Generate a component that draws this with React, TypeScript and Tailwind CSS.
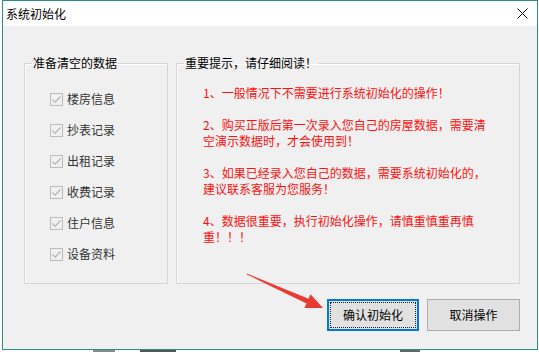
const font = { fontFamily: '"Microsoft YaHei", "Noto Sans CJK SC", "Noto Sans", sans-serif' };

const items = ["楼房信息", "抄表记录", "出租记录", "收费记录", "住户信息", "设备资料"];

const notes = [
  ["1、一般情况下不需要进行系统初始化的操作！"],
  ["2、购买正版后第一次录入您自己的房屋数据，需要清", "空演示数据时，才会使用到！"],
  ["3、如果已经录入您自己的数据，需要系统初始化的，", "建议联系客服为您服务！"],
  ["4、数据很重要，执行初始化操作，请慎重慎重再慎", "重！！！"],
];

function Check() {
  return (
    <span className="flex h-[13px] w-[13px] items-center justify-center border border-[#bcbcbc] bg-[#f0f0f0]">
      <svg width="11" height="11" viewBox="0 0 11 11">
        <path d="M1.5 5.5 L4.2 8.2 L9.5 2.5" fill="none" stroke="#b4b4b4" strokeWidth="1.2" />
      </svg>
    </span>
  );
}

export default function App() {
  return (
    <div className="relative h-[352px] w-[539px] overflow-hidden bg-white text-[12px] leading-[16px] text-black" style={font}>
      <div className="ml-[2px] flex h-[350px] w-[536px] flex-col border border-[#2f8d83]">
        {/* title bar */}
        <div className="flex h-[25px] items-center justify-between bg-white pl-[3px] pr-[9px]">
          <span>系统初始化</span>
          <svg width="11" height="11" viewBox="0 0 11 11">
            <path d="M0.5 0.5 L10.5 10.5 M10.5 0.5 L0.5 10.5" stroke="#111" strokeWidth="1" />
          </svg>
        </div>

        <div className="flex flex-1 flex-col bg-[#f0f0f0] pl-[21px] pr-[17px] pt-[29px]">
          <div className="flex h-[229px] gap-[8px]">
            <fieldset className="w-[144px] border border-[#d5d5d5] px-[7px] shadow-[inset_1px_1px_0_#fff]">
              <legend className="px-[1px]">准备清空的数据</legend>
              <div className="flex flex-col gap-[15px] pl-[18px] pt-[20px]">
                {items.map((t) => (
                  <label key={t} className="flex h-[16px] items-center gap-[4px] text-[#333]">
                    <Check />
                    <span>{t}</span>
                  </label>
                ))}
              </div>
            </fieldset>

            <fieldset className="flex-1 border border-[#d5d5d5] px-[7px] shadow-[inset_1px_1px_0_#fff]">
              <legend className="px-[1px]">重要提示，请仔细阅读！</legend>
              <div className="flex flex-col gap-[16px] pl-[19px] pt-[14px] text-[#ff1010]">
                {notes.map((p, i) => (
                  <p key={i} className="whitespace-nowrap">
                    {p.map((l, j) => (
                      <span key={j} className="block">
                        {l}
                      </span>
                    ))}
                  </p>
                ))}
              </div>
            </fieldset>
          </div>

          <div className="mt-[15px] flex justify-end gap-[8px]">
            <button className="flex h-[32px] w-[92px] items-center justify-center border-2 border-[#0078d7] bg-[#e1e1e1] p-[1px]">
              <span className="flex h-full w-full items-center justify-center border border-dotted border-[#222]">
                确认初始化
              </span>
            </button>
            <button className="flex h-[32px] w-[93px] items-center justify-center border border-[#adadad] bg-[#e1e1e1]">
              取消操作
            </button>
          </div>
        </div>
      </div>

      {/* bits of the window behind */}
      <div className="flex h-[2px]">
        <div className="ml-[93px] w-[22px] bg-[#8a8a8a]" />
        <div className="ml-[25px] w-[36px] bg-[#555]" />
        <div className="ml-[224px] w-[20px] bg-[#666]" />
      </div>

      {/* red arrow annotation */}
      <svg className="pointer-events-none absolute left-0 top-0" width="539" height="352">
        <polygon
          points="247,273.6 308.5,298.8 310.6,294.3 323,308 304.4,307.9 306.5,303.4 246.8,274.4"
          fill="#ea3b32"
        />
      </svg>
    </div>
  );
}
